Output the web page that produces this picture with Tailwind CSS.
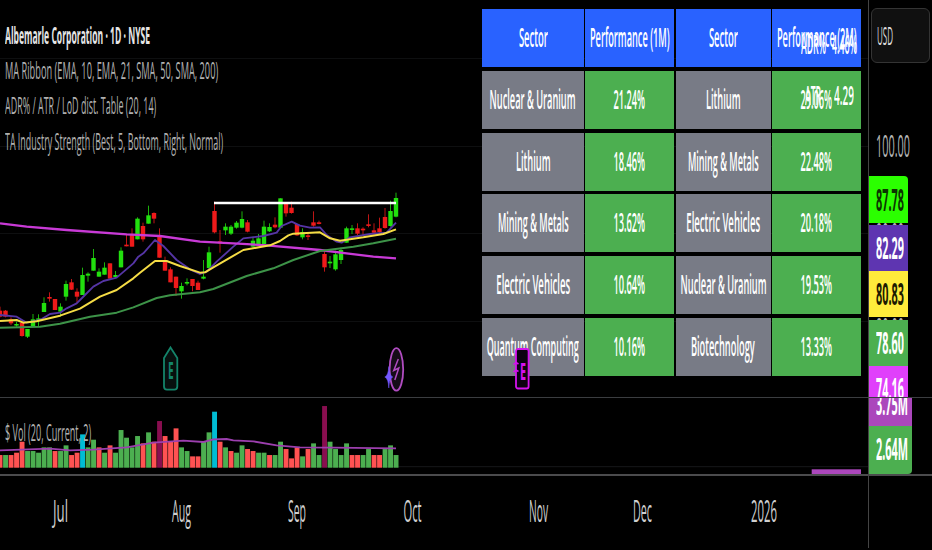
<!DOCTYPE html>
<html lang="en">
<head>
  <meta charset="UTF-8" />
  <meta name="viewport" content="width=device-width, initial-scale=1.0"/>
  <title>Albemarle Corporation - 1D</title>
  <script src="https://cdn.jsdelivr.net/npm/@tailwindcss/browser@4"></script>
</head>
<body class="bg-black overflow-hidden font-['Open_Sans',sans-serif] whitespace-nowrap">
  <div class="w-[932px] h-[550px] flex bg-black overflow-hidden">
    <!-- Chart side -->
    <div class="w-[868px] h-[550px] shrink-0 flex flex-col">
      <!-- Price pane -->
      <main class="relative h-[397px] flex justify-between">
        <svg class="absolute inset-0" width="868" height="397" viewBox="0 0 868 397">
          <path d="M0 58.5H868M0 146.5H868M0 233.5H868M0 321.5H868" stroke="#0e0f10"/>
          <g id="candles"></g>
          <g transform="translate(0 180) scale(.33333)" fill="none" stroke-width="5.5" stroke-linejoin="round">
            <path stroke="#5535a5" d="M0 405L50 410L80 428L120 420L150 402L180 398L200 385L230 370L255 345L280 320L310 303L350 293L400 250L415 230L430 220L465 180L490 198L530 240L570 268L600 282L620 275L650 245L700 200L730 175L790 168L830 158L845 138L875 125L900 137L930 143L960 142L980 165L1010 185L1025 188L1050 172L1110 162L1160 158L1188 128"/>
            <path stroke="#c83ad6" stroke-width="7" d="M0 130L80 140L200 150L380 163L480 168L600 185L700 190L800 196L960 210L1040 220L1120 230L1188 235"/>
            <path stroke="#3d9348" stroke-width="6" d="M0 443L120 440L180 431L270 410L350 398L400 382L470 354L510 346L600 337L640 327L740 288L820 265L880 240L960 213L1060 200L1120 190L1188 176"/>
            <path stroke="#f5dc45" stroke-width="6" d="M0 423L50 420L70 428L110 424L180 407L240 386L300 350L350 330L400 295L420 278L465 243L500 243L540 258L600 278L615 277L640 262L730 210L810 196L840 183L865 166L880 161L960 157L990 175L1020 182L1090 172L1150 162L1188 148"/>
          </g>
          <path d="M214 203H396" stroke="#fff" stroke-width="2.4"/>
          <!-- earnings marker -->
          <path d="M170.5 347.5L177.3 358V386.5Q177.3 389.6 174.3 389.6H167Q164 389.6 164 386.5V358Z" fill="#07100e" stroke="#14846a" stroke-width="1.8"/>
          <text x="168" y="379" font-size="24" font-weight="700" fill="#14846a" textLength="5.6" lengthAdjust="spacingAndGlyphs">E</text>
          <!-- lightning marker -->
          <ellipse cx="396.4" cy="369.4" rx="6.8" ry="21.2" fill="#150c18" stroke="#b04cc0" stroke-width="1.8"/>
          <path d="M398.3 359L393.8 370.5L398.8 368L394.8 380" fill="none" stroke="#b04cc0" stroke-width="1.5"/>
          <path d="M388.8 366.5Q389.3 375.5 392.8 377Q389.3 378.5 388.8 388Q388.3 378.5 384.8 377Q388.3 375.5 388.8 366.5Z" fill="#7357ff" stroke="#7357ff" stroke-width=".5"/>
        </svg>

        <!-- Indicator legend -->
        <div class="relative w-[240px] pt-[17px] pl-[5px] flex flex-col items-start text-[24px] leading-[35.2px] text-[#b0b0b0]">
          <span data-w="145" class="inline-block origin-left font-bold text-[#e6e6e6]">Albemarle Corporation · 1D · NYSE</span>
          <span data-w="213" class="inline-block origin-left">MA Ribbon (EMA, 10, EMA, 21, SMA, 50, SMA, 200)</span>
          <span data-w="151" class="inline-block origin-left">ADR% / ATR / LoD dist. Table (20, 14)</span>
          <span data-w="218" class="inline-block origin-left">TA Industry Strength (Best, 5, Bottom, Right, Normal)</span>
        </div>

        <!-- Sector strength table -->
        <div class="relative mt-[9px] mr-[7px]">
          <div id="sectors" class="grid grid-cols-[101.5px_89.5px_95px_89px] auto-rows-[58px] gap-x-[1.3px] gap-y-[3.8px] text-[27px] leading-none font-semibold text-white"></div>
          <!-- ADR / ATR readout -->
          <div class="absolute top-[9px] right-0 w-[62px] text-[27px] leading-[51px] font-semibold text-white">
            <div class="h-[51px] flex justify-between pr-[3px]">
              <div class="w-[26px] ml-[2px]"><span data-w="25" class="inline-block origin-left">ADR%</span></div>
              <div class="w-[26px]"><span data-w="25" class="inline-block origin-left">4.46%</span></div>
            </div>
            <div class="h-[51px] flex justify-between pr-[2px]">
              <div class="w-[20px] ml-[6px]"><span data-w="16" class="inline-block origin-left">ATR</span></div>
              <div class="w-[25px]"><span data-w="20" class="inline-block origin-left">4.29</span></div>
            </div>
          </div>
          <!-- upcoming earnings marker -->
          <svg class="absolute left-[30px] top-[338px]" width="20" height="44" viewBox="0 0 20 44">
            <rect x="4" y="2" width="12.6" height="39.5" rx="2" fill="#0b0210" stroke="#d412ee" stroke-width="1.8"/>
            <path d="M1.5 17.5L4 15.5L6.5 17M1.5 25L4 23L6.5 24.5" fill="none" stroke="#d412ee" stroke-width="1.5"/>
            <text x="8" y="32.5" font-size="24" font-weight="700" fill="#d412ee" textLength="6" lengthAdjust="spacingAndGlyphs">E</text>
          </svg>
        </div>
      </main>

      <!-- Volume pane -->
      <section class="relative h-[77px] border-t border-[#3b3d40] flex items-end">
        <svg class="absolute left-0 top-0" width="868" height="76" viewBox="0 398 868 76">
          <path d="M0 466.7H868" stroke="#17181a"/>
          <g id="volume"></g>
          <path transform="translate(0 340) scale(.33333)" fill="none" stroke="#9c3fae" stroke-width="5.5" d="M0 331L150 326L210 331L280 329L380 322L460 308L550 302L610 306L640 298L680 297L700 301L760 304L830 316L900 322L1000 323L1188 325"/>
          <rect x="811.7" y="469.3" width="49.3" height="5" fill="#ab47bc"/>
        </svg>
        <div class="relative pl-[5px] pb-[24px] text-[24px] leading-[36px] text-[#b0b0b0]"><span data-w="86" class="inline-block origin-left">$ Vol (20, Current, 2)</span></div>
      </section>

      <!-- Time axis -->
      <footer class="h-[76px] border-t-2 border-[#4b4b4d]">
        <svg width="868" height="72" viewBox="0 476 868 72" font-size="31" font-weight="500" fill="#cfcfcf">
          <text x="53" y="521.5" textLength="15" lengthAdjust="spacingAndGlyphs">Jul</text>
          <text x="172" y="521.5" textLength="19" lengthAdjust="spacingAndGlyphs">Aug</text>
          <text x="288" y="521.5" textLength="18" lengthAdjust="spacingAndGlyphs">Sep</text>
          <text x="403.5" y="521.5" textLength="18" lengthAdjust="spacingAndGlyphs">Oct</text>
          <text x="529" y="521.5" textLength="19" lengthAdjust="spacingAndGlyphs">Nov</text>
          <text x="633" y="521.5" textLength="19" lengthAdjust="spacingAndGlyphs">Dec</text>
          <text x="751" y="521.5" textLength="26" lengthAdjust="spacingAndGlyphs">2026</text>
        </svg>
      </footer>
    </div>

    <!-- Price axis -->
    <aside class="relative w-[64px] h-[548px] border-l border-[#444] flex flex-col items-start text-[31px] font-bold text-white">
      <div class="mt-[8px] ml-[2px] w-[59px] h-[54.5px] shrink-0 rounded-md border-[1.5px] border-[#343434] bg-[#101010] pl-[5px] text-[25px] leading-[52px] font-medium text-[#dcdcdc]"><span data-w="16" class="inline-block origin-left">USD</span></div>
      <div class="mt-[59.5px] h-[46px] shrink-0 pl-[7px] leading-[46px] font-medium text-[#b4b4b4]"><span data-w="34" class="inline-block origin-left">100.00</span></div>
      <!-- grid prices, mostly covered by the tags -->
      <div class="absolute top-[210px] left-[7px] leading-[46px] font-normal text-[#b4b4b4]"><span data-w="28" class="inline-block origin-left">90.00</span></div>
      <div class="absolute top-[305px] left-[7px] leading-[46px] font-normal text-[#b4b4b4]"><span data-w="28" class="inline-block origin-left">80.00</span></div>
      <div class="relative mt-[8px] w-[39px] h-[46.7px] shrink-0 pl-[7px] leading-[46px] bg-[#2bff00] text-[#0c3300] rounded-tr-sm"><span data-w="28" class="inline-block origin-left">87.78</span></div>
      <div class="relative mt-[2.3px] w-[39px] h-[46px] shrink-0 pl-[7px] leading-[44px] bg-[#5e35b1]"><span data-w="28" class="inline-block origin-left">82.29</span></div>
      <div class="relative w-[39px] h-[46.5px] shrink-0 pl-[7px] leading-[45px] bg-[#ffeb3b] text-[#1c1a00]"><span data-w="28" class="inline-block origin-left">80.83</span></div>
      <div class="relative mt-[3px] w-[39px] h-[46px] shrink-0 pl-[7px] leading-[45px] bg-[#4caf50]"><span data-w="28" class="inline-block origin-left">78.60</span></div>
      <div class="relative w-[39px] h-[30.5px] shrink-0 pl-[7px] leading-[44px] bg-[#e040fb] overflow-hidden"><span data-w="28" class="inline-block origin-left">74.16</span></div>
      <div class="w-full h-px shrink-0 bg-[#3b3d40]"></div>
      <div class="relative w-[43px] h-[28.5px] shrink-0 pl-[7px] bg-[#ab47bc] overflow-hidden"><div class="-mt-[18px] leading-[46px]"><span data-w="32" class="inline-block origin-left">3.75M</span></div></div>
      <div class="relative w-[43px] h-[47.5px] shrink-0 pl-[7px] leading-[45px] bg-[#4caf50] rounded-br-sm"><span data-w="32" class="inline-block origin-left">2.64M</span></div>
      <div class="w-full h-[2px] shrink-0 bg-[#4b4b4d]"></div>
    </aside>
  </div>

  <script>
    const STEP = 5.5;

    // [up, high, body top, body bottom, low], a third of a pixel each, from y = 180
    const candles = [
      [0,380,392,410,412],[0,390,392,410,412],[0,412,418,430,435],[1,425,432,436,440],[0,425,428,468,470],
      [1,447,447,470,474],[1,402,418,440,440],[1,403,415,420,440],[1,352,369,396,396],[0,337,351,356,365],
      [0,357,357,390,390],[1,370,380,395,410],[1,302,312,350,362],[0,297,307,329,330],[0,325,335,350,368],
      [1,263,285,345,345],[1,277,281,287,305],[1,207,234,272,272],[1,265,275,290,290],[1,247,263,284,284],
      [0,250,250,296,296],[1,273,285,291,295],[1,202,212,262,262],[0,163,194,199,199],[0,145,163,200,200],
      [1,112,116,178,178],[0,128,138,178,185],[1,77,106,131,131],[0,97,99,116,130],[0,145,168,233,233],
      [0,230,242,272,272],[0,262,268,307,307],[0,290,290,324,348],[1,308,318,334,356],[1,295,306,310,316],
      [0,297,297,318,334],[0,302,308,330,330],[1,240,290,296,298],[1,200,217,264,270],[0,65,93,157,160],
      [0,150,184,190,218],[1,130,140,151,165],[1,135,140,161,165],[1,123,128,143,146],[1,94,117,143,145],
      [0,120,127,155,157],[1,170,182,200,205],[1,162,175,195,195],[1,122,140,192,192],[1,130,141,154,156],
      [0,112,134,142,145],[1,55,55,143,143],[0,66,70,100,110],[0,65,83,99,101],[0,132,132,166,168],
      [1,145,156,172,178],[0,160,166,170,180],[0,94,127,137,140],[0,122,127,131,133],[0,213,222,262,275],
      [1,228,245,250,264],[1,212,223,268,272],[1,203,210,240,252],[1,140,145,188,188],[1,135,145,149,162],
      [0,130,145,161,165],[0,142,146,151,165],[0,103,133,137,142],[0,130,151,158,160],[0,113,145,156,158],
      [0,84,111,144,146],[1,62,93,138,140],[1,38,54,110,112]
    ];
    document.getElementById('candles').innerHTML = candles.map(([up, hi, top, bot, lo], i) => {
      const x = i * STEP;
      const y = v => 180 + v / 3;
      const c = up ? '#22e00e' : '#ee1a1a';
      return `<path d="M${x} ${y(hi)}V${y(lo)}" stroke="${c}" stroke-width="1" stroke-opacity=".8"/>
        <rect x="${x - 2.2}" y="${y(top)}" width="4.4" height="${Math.max(1.6, (bot - top) / 3)}" fill="${c}"/>`;
    }).join('');

    // g up, r down, c / m unusual volume
    const volume = 'r38 g38 r38 r45 r78 g50 g50 g45 g61 g61 r50 g50 g67 r38 r45 c100 g61 g84 r61 g45 r67 g45 g113 g90 g61 g95 r73 g106 r78 m140 r95 r78 r118 g61 g50 r34 r34 g78 g106 c168 r78 g61 r50 g45 g67 r56 r50 g45 g45 r38 g38 g78 r56 r28 r61 g34 r56 g73 g38 m185 g78 g56 g38 g73 r38 r38 g38 g56 r38 r38 g56 g67 g38'.split(' ');
    const volColors = { g: '#4caf50', r: '#ff5252', c: '#00bcd4', m: '#880e4f' };
    document.getElementById('volume').innerHTML = volume.map((v, i) => {
      const h = v.slice(1) / 3;
      return `<rect x="${i * STEP - 2.4}" y="${467.7 - h}" width="4.9" height="${h}" fill="${volColors[v[0]]}"/>`;
    }).join('');

    // Table cells: [text, width]
    const rows = [
      [['Sector', 29], ['Performance (1M)', 80], ['Sector', 29], ['Performance (2M)', 80]],
      [['Nuclear & Uranium', 86], ['21.24%', 31.5], ['Lithium', 34.5], ['29.06%', 31.5]],
      [['Lithium', 34.5], ['18.46%', 31.5], ['Mining & Metals', 71], ['22.48%', 31.5]],
      [['Mining & Metals', 71], ['13.62%', 31.5], ['Electric Vehicles', 74], ['20.18%', 31.5]],
      [['Electric Vehicles', 74], ['10.64%', 31.5], ['Nuclear & Uranium', 86], ['19.53%', 31.5]],
      [['Quantum Computing', 92], ['10.16%', 31.5], ['Biotechnology', 64], ['13.33%', 31.5]]
    ];
    document.getElementById('sectors').innerHTML = rows.map((row, r) => row.map(([text, w], c) => {
      const bg = r === 0 ? 'bg-[#2962ff]' : c % 2 ? 'bg-[#4caf50]' : 'bg-[#787b86]';
      return `<div class="${bg} min-w-0 pb-[3px] flex items-center justify-center"><span data-w="${w}" class="inline-block shrink-0">${text.replace('&', '&amp;')}</span></div>`;
    }).join('')).join('');

    // Condense each label to its width, again whenever its natural size changes
    const labels = document.querySelectorAll('[data-w]');
    const fit = el => {
      if (el.offsetWidth) el.style.transform = `scaleX(${el.dataset.w / el.offsetWidth})`;
    };
    const observer = new ResizeObserver(entries => entries.forEach(e => fit(e.target)));
    labels.forEach(el => { fit(el); observer.observe(el); });
    window.addEventListener('load', () => labels.forEach(fit));
    document.fonts.ready.then(() => labels.forEach(fit));
  </script>
</body>
</html>
